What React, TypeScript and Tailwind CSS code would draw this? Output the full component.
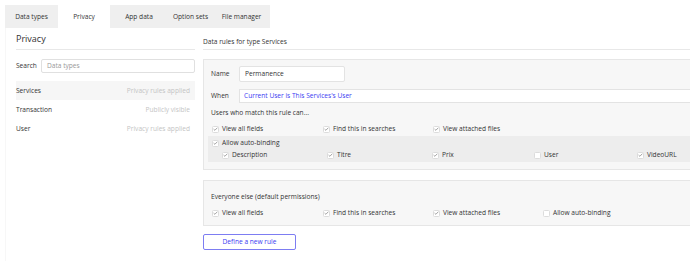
import React from "react";

const tabs = [
  { label: "Data types", w: "w-[53px]", active: false },
  { label: "Privacy", w: "w-[52px]", active: true },
  { label: "App data", w: "w-[58px]", active: false },
  { label: "Option sets", w: "w-[45px]", active: false },
  { label: "File manager", w: "w-[57px]", active: false },
];

const types = [
  { name: "Services", status: "Privacy rules applied", selected: true },
  { name: "Transaction", status: "Publicly visible", selected: false },
  { name: "User", status: "Privacy rules applied", selected: false },
];

function Check({ label, checked = true, w }: { label: string; checked?: boolean; w: string }) {
  return (
    <div className={`flex h-[10px] items-center gap-[3px] ${w}`}>
      <span className="flex h-[7px] w-[7px] shrink-0 items-center justify-center rounded-[1.5px] border border-[#dcdcdc] bg-white">
        {checked && (
          <svg width="5" height="4" viewBox="0 0 5 4">
            <path d="M0.6 2.1 L1.9 3.3 L4.4 0.7" fill="none" stroke="#8a8a8a" strokeWidth="0.8" />
          </svg>
        )}
      </span>
      <span className="whitespace-nowrap">{label}</span>
    </div>
  );
}

export default function App() {
  return (
    <div className="h-[261px] w-[690px] overflow-hidden bg-white pl-[5px] pt-[5px] font-['Open_Sans',sans-serif] text-[6.6px] leading-[10px] text-[#333]">
      {/* tabs */}
      <div className="flex h-[23px] w-[265px] bg-[#efefef]">
        {tabs.map((t) => (
          <div
            key={t.label}
            className={`flex h-full items-center justify-center ${t.w} ${t.active ? "bg-white" : ""}`}
          >
            {t.label}
          </div>
        ))}
      </div>

      <div className="flex h-[233px]">
        {/* left column */}
        <div className="w-[190px] shrink-0 border-l border-[#f7f7f7] pl-[10px]">
          <div className="flex h-[22px] items-center border-b border-[#e8e8e8] text-[9px] leading-[12px]">
            Privacy
          </div>
          <div className="mt-[9px] flex h-[14px] items-center">
            <span className="w-[25px]">Search</span>
            <div className="flex h-[14px] flex-1 items-center rounded-[2px] border border-[#e0e0e0] pl-[5px] text-[#999]">
              Data types
            </div>
          </div>
          <div className="mt-[8px]">
            {types.map((t) => (
              <div
                key={t.name}
                className={`flex h-[19px] items-center justify-between pr-[5px] ${t.selected ? "bg-[#f6f6f6]" : ""}`}
              >
                <span>{t.name}</span>
                <span className="text-[#c4c4c4]">{t.status}</span>
              </div>
            ))}
          </div>
        </div>

        {/* right column */}
        <div className="ml-[8px] w-[540px] shrink-0">
          <div className="flex h-[22px] items-end border-b border-[#e8e8e8] pb-[2px]">
            Data rules for type Services
          </div>

          <div className="mt-[9px] border border-[#e6e6e6] bg-[#f7f7f7] pb-[7px] pl-[4px] pt-[6px]">
            <div className="flex h-[16px] items-center pl-[3px]">
              <span className="w-[28px]">Name</span>
              <div className="flex h-[16px] w-[106px] items-center rounded-[2px] border border-[#e3e3e3] bg-white pl-[5px]">
                Permanence
              </div>
            </div>
            <div className="mt-[7px] flex h-[14px] items-center pl-[3px]">
              <span className="w-[28px]">When</span>
              <div className="flex h-[14px] flex-1 items-center border border-[#e3e3e3] bg-white pl-[4px] text-[#3b3bf2]">
                Current User is This Services's User
              </div>
            </div>
            <div className="mt-[5px] pl-[3px]">Users who match this rule can...</div>
            <div className="mt-[6px] flex pl-[4px]">
              <Check label="View all fields" w="w-[111px]" />
              <Check label="Find this in searches" w="w-[110px]" />
              <Check label="View attached files" w="w-[110px]" />
            </div>
            <div className="mt-[2px] bg-[#ededed] pb-[2px] pl-[4px] pt-[2px]">
              <Check label="Allow auto-binding" w="w-[120px]" />
              <div className="mt-[2px] flex pl-[10px]">
                <Check label="Description" w="w-[105px]" />
                <Check label="Titre" w="w-[105px]" />
                <Check label="Prix" w="w-[102px]" />
                <Check label="User" checked={false} w="w-[103px]" />
                <Check label="VideoURL" w="w-[103px]" />
              </div>
            </div>
          </div>

          <div className="mt-[10px] border border-[#e6e6e6] bg-[#f7f7f7] pb-[7px] pl-[4px] pt-[11px]">
            <div className="pl-[3px]">Everyone else (default permissions)</div>
            <div className="mt-[6px] flex pl-[4px]">
              <Check label="View all fields" w="w-[111px]" />
              <Check label="Find this in searches" w="w-[110px]" />
              <Check label="View attached files" w="w-[110px]" />
              <Check label="Allow auto-binding" checked={false} w="w-[110px]" />
            </div>
          </div>

          <button className="mt-[8px] flex h-[16px] w-[93px] items-center justify-center rounded-[2px] border border-[#7d7df2] bg-white text-[#3b3bf2]">
            Define a new rule
          </button>
        </div>
      </div>
    </div>
  );
}
